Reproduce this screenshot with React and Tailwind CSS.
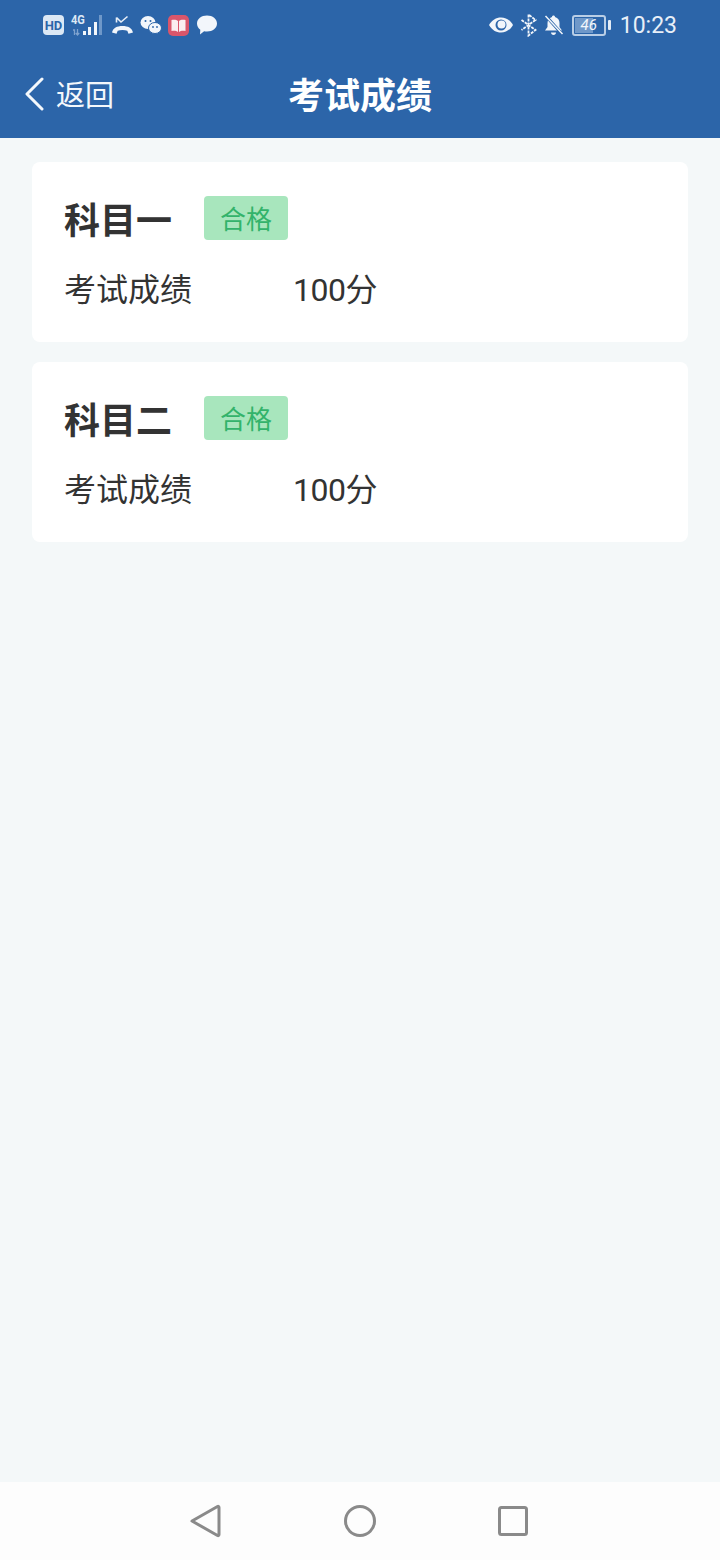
function LeftStatus() {
  return (
    <div className="flex items-center">
      <div className="ml-[43px] flex h-[20px] w-[21px] items-center justify-center rounded-[4px] bg-[#dce8f5] font-['Roboto'] text-[13px] font-bold leading-none text-[#2c65a9]">HD</div>
      <div className="relative ml-[6px] h-[24px] w-[36px]">
        <span className="absolute left-[1px] top-[1px] origin-top-left scale-x-[0.85] font-['Roboto'] text-[13px] font-bold leading-[12px] text-[#dce8f5]">4G</span>
        <svg className="absolute left-0 top-0" width="36" height="24" viewBox="0 0 36 24">
          <path d="M3 17h1.500v5M7.500 16v6M5.800 20l1.700 2 1.700-2" stroke="#7fa3cf" strokeWidth="1.300" fill="none" />
          <rect x="13" y="18" width="3" height="4" fill="#f2f6fb" />
          <rect x="18" y="14" width="3" height="8" fill="#f2f6fb" />
          <rect x="24" y="9" width="3" height="13" fill="#f2f6fb" />
          <rect x="29" y="2" width="3" height="20" fill="#6f98c9" />
        </svg>
      </div>
      <svg className="ml-[5px]" width="24" height="20" viewBox="0 0 24 20" fill="none">
        <path d="M5.500 2.500v5M5.500 2.500L10 7l6.500-5.500" stroke="#e8eff8" strokeWidth="1.600" />
        <path d="M1 17.500C2 13 6 11 11.500 11S21 13 22 17.500l-4.500 1.200-1.200-3c-2.800-1-6.800-1-9.600 0l-1.200 3z" fill="#f2f6fb" />
      </svg>
      <svg className="ml-[5px]" width="22" height="20" viewBox="0 0 22 20">
        <ellipse cx="8" cy="7.500" rx="7.500" ry="6.500" fill="#f2f6fb" />
        <circle cx="5.500" cy="6" r="1" fill="#2c65a9" />
        <circle cx="10.500" cy="6" r="1" fill="#2c65a9" />
        <ellipse cx="15" cy="13" rx="6.500" ry="5.500" fill="#f2f6fb" stroke="#2c65a9" strokeWidth="1" />
        <circle cx="13" cy="12" r="0.900" fill="#2c65a9" />
        <circle cx="17" cy="12" r="0.900" fill="#2c65a9" />
      </svg>
      <svg className="ml-[6px]" width="21" height="21" viewBox="0 0 21 21">
        <rect x="0" y="0" width="21" height="21" rx="5" fill="#d9566b" />
        <path d="M3.500 5c2.500-.5 5-.5 6.500 1v11c-1.500-1.300-4-1.500-6.500-1zM17.500 5c-2.500-.5-5-.5-6.500 1v11c1.500-1.300 4-1.500 6.500-1z" fill="#fbeef0" />
      </svg>
      <svg className="ml-[7px]" width="22" height="22" viewBox="0 0 22 22">
        <path d="M11 1.500c5.700 0 10 3.500 10 8s-4.300 8-10 8c-1 0-2-.1-2.900-.3L4 20.500l.3-4.800C2.200 14.200 1 12 1 9.500c0-4.500 4.300-8 10-8z" fill="#f2f6fb" />
      </svg>
    </div>
  );
}

function RightStatus() {
  return (
    <div className="flex items-center">
      <svg width="26" height="18" viewBox="0 0 26 18" fill="none">
        <path d="M1 9c3-5 7-7.500 12-7.500S22 4 25 9c-3 5-7 7.500-12 7.500S4 14 1 9z" fill="#f2f6fb" />
        <circle cx="13" cy="9" r="5.500" fill="#2c65a9" />
        <circle cx="13.500" cy="8.500" r="4" fill="#f2f6fb" />
      </svg>
      <svg className="ml-[6px]" width="17" height="24" viewBox="0 0 17 24" fill="none">
        <path d="M1.500 7l14 10-7 5.500V1.500l7 5.500-14 10" stroke="#f2f6fb" strokeWidth="1.800" strokeDasharray="3 1" />
      </svg>
      <svg className="ml-[6px]" width="21" height="22" viewBox="0 0 21 22">
        <path d="M10.500 1.500c.8 0 1.500.6 1.500 1.400 3 .8 4.500 3.200 4.500 6.100v4l2.500 3.500H2l2.500-3.500V9c0-2.900 1.500-5.300 4.500-6.100 0-.8.700-1.400 1.500-1.400z" fill="#f2f6fb" />
        <path d="M8 18.500h5c0 1.500-1.100 2.500-2.500 2.500S8 20 8 18.500z" fill="#f2f6fb" />
        <path d="M2 1l17 19" stroke="#2c65a9" strokeWidth="3" />
        <path d="M2.500 2l17 18" stroke="#f2f6fb" strokeWidth="1.500" />
      </svg>
      <div className="relative ml-[8px] h-[21px] w-[34px] rounded-[3px] border-2 border-[#b9cee6] p-px">
        <div className="h-full w-[18px] bg-[#6f98c9]" />
        <span className="absolute inset-0 flex items-center justify-center font-['Roboto'] text-[15px] italic leading-none text-[#f2f6fb]">46</span>
      </div>
      <div className="ml-[2px] h-[10px] w-[3px] rounded-[1px] bg-[#e3ecf6]" />
      <span className="ml-[9px] mr-[43px] font-['Roboto'] text-[23px] leading-none text-[#e8eff8]">10:23</span>
    </div>
  );
}

function ResultCard({ name }) {
  return (
    <div className="h-[180px] rounded-[8px] bg-white pl-8 pt-[34px]">
      <div className="flex h-[44px] items-center">
        <span className="pt-[8px] font-['Roboto','Noto_Sans_CJK_SC',sans-serif] text-[36px] font-bold leading-none text-[#333333]">{name}</span>
        <span className="ml-8 flex h-[44px] w-[84px] items-center justify-center rounded-[4px] bg-[#a8e6bd] pt-[4px] font-['Roboto','Noto_Sans_CJK_SC',sans-serif] text-[26px] leading-none text-[#33b36b]">合格</span>
      </div>
      <div className="mt-[34px] flex items-center font-['Roboto','Noto_Sans_CJK_SC',sans-serif] text-[32px] leading-none text-[#333333]">
        <span className="w-[229px]">考试成绩</span>
        <span className="tracking-[-0.5px]">100分</span>
      </div>
    </div>
  );
}

export default function App() {
  return (
    <div className="flex h-[1560px] w-[720px] flex-col bg-[#f4f8f9]">
      <header className="h-[138px] shrink-0 bg-[#2c65a9]">
        <div className="flex h-[50px] items-center justify-between">
          <LeftStatus />
          <RightStatus />
        </div>
        <div className="relative flex h-[88px] items-center justify-center pt-[6px]">
          <div className="absolute left-[24px] top-[27px] flex items-center">
            <svg width="20" height="34" viewBox="0 0 20 34" fill="none">
              <path d="M18 2L3 17l15 15" stroke="#f4f8fc" strokeWidth="3" strokeLinecap="round" strokeLinejoin="round" />
            </svg>
            <span className="ml-[12px] pt-[4px] font-['Roboto','Noto_Sans_CJK_SC',sans-serif] text-[29px] leading-none text-[#f4f8fc]">返回</span>
          </div>
          <h1 className="font-['Roboto','Noto_Sans_CJK_SC',sans-serif] text-[36px] font-bold leading-none text-white">考试成绩</h1>
        </div>
      </header>

      <main className="flex flex-1 flex-col gap-5 px-8 pt-6">
        <ResultCard name="科目一" />
        <ResultCard name="科目二" />
      </main>

      <nav className="flex h-[78px] shrink-0 items-center justify-center gap-[121px] bg-[#fdfdfd] pb-[1px] pr-[2px]">
        <svg width="32" height="34" viewBox="0 0 32 34" fill="none">
          <path d="M2 17L27.500 2.500c.8-.4 1.500 0 1.500 1v27c0 1-.7 1.400-1.500 1z" stroke="#8a8a8a" strokeWidth="3" strokeLinejoin="round" />
        </svg>
        <svg width="34" height="34" viewBox="0 0 34 34" fill="none">
          <circle cx="17" cy="17" r="14.500" stroke="#8a8a8a" strokeWidth="3" />
        </svg>
        <svg width="30" height="30" viewBox="0 0 30 30" fill="none">
          <rect x="1.500" y="1.500" width="27" height="27" rx="2" stroke="#8a8a8a" strokeWidth="3" />
        </svg>
      </nav>
    </div>
  );
}
